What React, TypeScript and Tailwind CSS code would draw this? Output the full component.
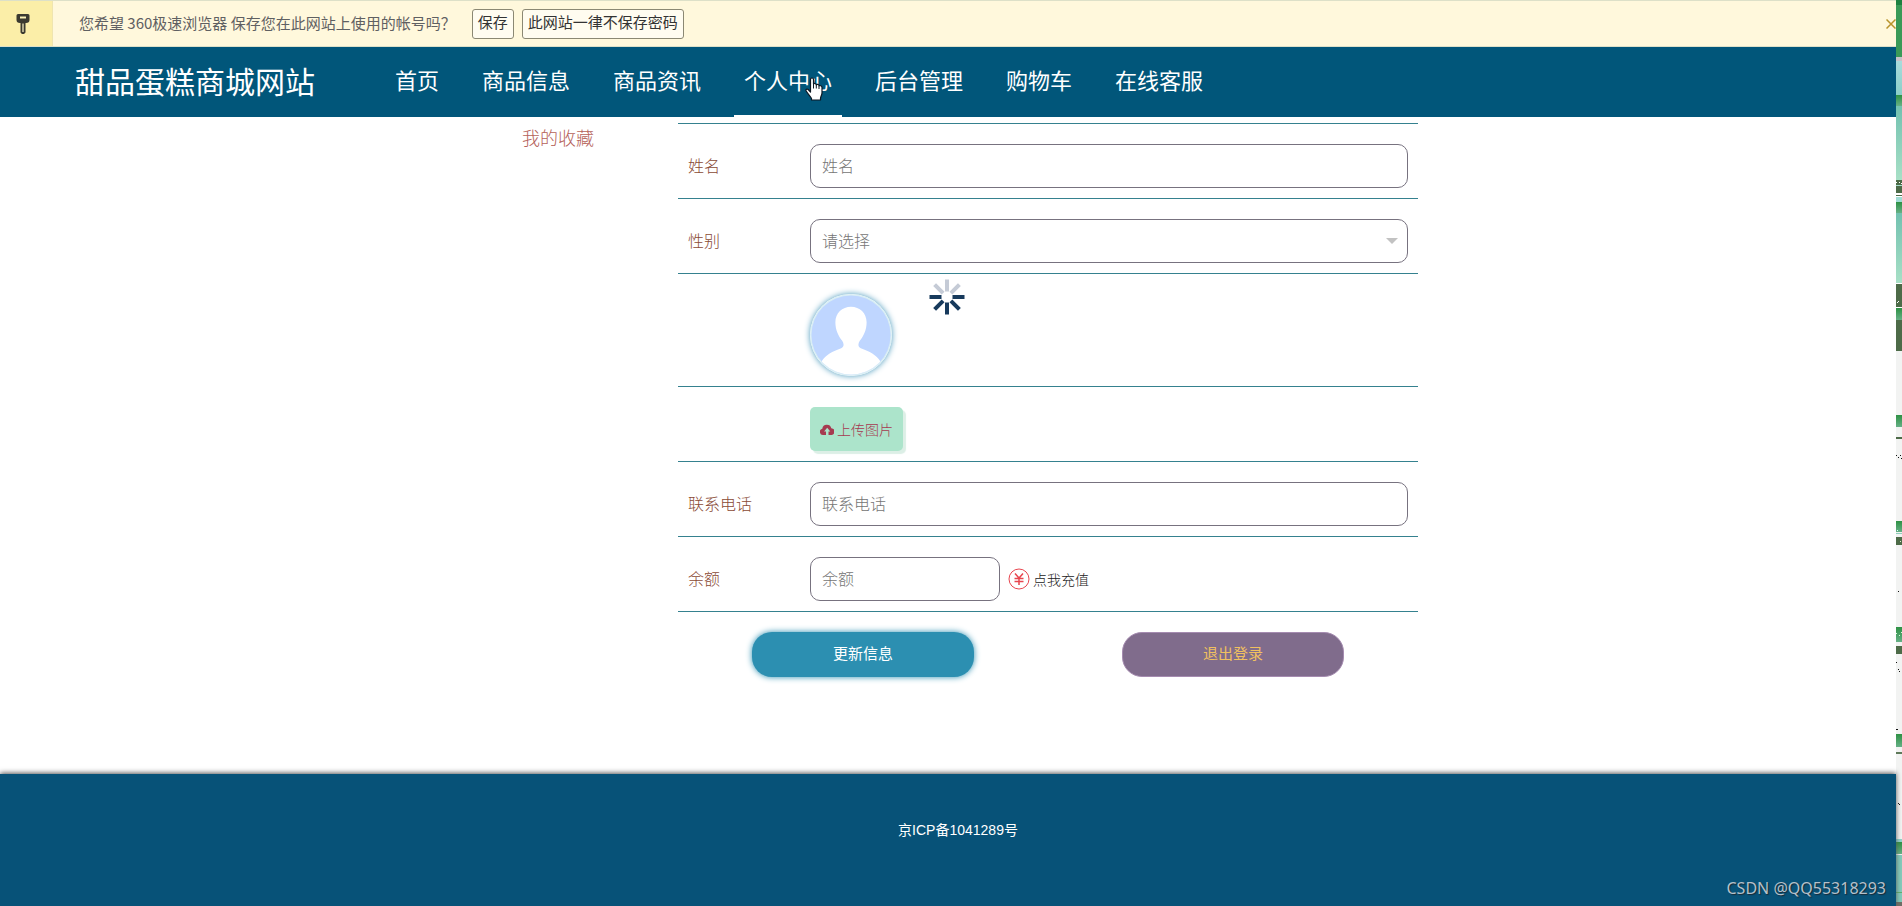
import type { ReactNode } from "react"

const NAV = ["首页", "商品信息", "商品资讯", "个人中心", "后台管理", "购物车", "在线客服"]
const CURRENT = "个人中心"

const FIELD =
    "h-11 rounded-[10px] border border-[#77727f] bg-white px-[11px] pb-[3px] text-base font-light text-[#757575] placeholder:text-[#757575]"

// Bands of the desktop wallpaper that shows beside the window: [y, height, fill]
const BANDS: [number, number, string][] = [
    [0, 5, "#1d8040"],
    [5, 52, "#3a9a57"],
    [57, 4, "#c6c3c8"],
    [61, 34, "url(#sky)"],
    [95, 11, "url(#grass)"],
    [106, 74, "url(#sea)"],
    [180, 13, "#4d6b48"],
    [185, 1, "#a6dccb"],
    [195, 1, "#4d6b48"],
    [197, 5, "#a0dcd4"],
    [202, 11, "url(#grass)"],
    [213, 70, "url(#sea)"],
    [284, 23, "#4d6b48"],
    [308, 12, "url(#grass)"],
    [320, 31, "#4d6b48"],
    [415, 12, "url(#grass)"],
    [437, 2, "#4d6b48"],
    [521, 11, "url(#grass)"],
    [533, 1, "#8fd0bd"],
    [537, 8, "#4d6b48"],
    [627, 15, "url(#grass)"],
    [646, 8, "#4d6b48"],
    [734, 13, "url(#grass)"],
    [752, 2, "#5f7a5a"],
    [839, 3, "#8fd4cb"],
    [842, 12, "url(#grass)"],
    [855, 47, "#84cbbb"],
    [892, 1, "#5cb170"],
    [902, 4, "#6f6f66"],
]

const SPECKS: [number, number, string][] = [
    [0, 182, "#fff"], [3, 182, "#fff"], [5, 183, "#fff"], [1, 302, "#fff"], [2, 301, "#fff"],
    [0, 455, "#111"], [2, 457, "#111"], [4, 455, "#111"], [5, 458, "#111"],
    [1, 530, "#dff"], [4, 541, "#dec"], [2, 591, "#111"], [0, 633, "#dfd"], [3, 635, "#dfd"],
    [5, 632, "#dfd"], [0, 662, "#111"], [2, 669, "#111"], [3, 671, "#111"],
    [0, 729, "#111"], [1, 729, "#111"], [2, 803, "#111"], [3, 804, "#111"],
]

function DesktopEdge() {
    return (
        <svg viewBox="0 0 6 906" preserveAspectRatio="none" className="w-1.5 shrink-0 self-stretch" aria-hidden>
            <defs>
                <linearGradient id="sky" x2="0" y2="1">
                    <stop stopColor="#a8dcdc" />
                    <stop offset="1" stopColor="#8bcfc8" />
                </linearGradient>
                <linearGradient id="grass" x2="0" y2="1">
                    <stop stopColor="#2e9144" />
                    <stop offset="1" stopColor="#66b086" />
                </linearGradient>
                <linearGradient id="sea" x2="0" y2="1">
                    <stop stopColor="#72c1b0" />
                    <stop offset="1" stopColor="#a8e0c6" />
                </linearGradient>
            </defs>
            <rect width="6" height="351" fill="#fff" />
            <rect y="351" width="6" height="555" fill="#f2f3f2" />
            {BANDS.map(([y, h, fill]) => (
                <rect key={y} y={y} width="6" height={h} fill={fill} />
            ))}
            {SPECKS.map(([x, y, fill]) => (
                <rect key={`${x}-${y}`} x={x} y={y} width="1" height="1" fill={fill} />
            ))}
        </svg>
    )
}

function KeyIcon() {
    return (
        <svg width="16" height="20" viewBox="0 0 16 20" aria-hidden>
            <path d="M1.5 1.5Q1.5 0 3 0H13Q14.500 0 14.500 1.500V6Q14.500 9 11 9H10.500V18.500L9 20H7L5.500 18.500V9H5Q1.500 9 1.500 6Z" fill="#3b3a30" />
            <path d="M5 2.500H11V4.500H5Z" fill="#fdf3b8" />
            <path d="M8 9.500V18" stroke="#d8d2a8" strokeWidth="1.500" />
        </svg>
    )
}

function HandCursor() {
    return (
        <svg
            width="18"
            height="24"
            viewBox="0 0 18 24"
            className="pointer-events-none absolute left-[71px] top-[30px]"
            aria-hidden
        >
            <path
                d="M5.500 2.500C5.500 .5 8.500 .5 8.500 2.500V7C9 6.200 11.200 6.300 11.300 7.800C12 6.900 14 7.300 14 8.800C15 8.200 17 8.800 17 10.500V16C17 18 15.500 19.500 15.500 21.500V23H6.500V21.500C5.500 19.500 3 17 1.200 14C.4 12.500 2 11.500 3.200 12.500L5.500 15Z"
                fill="#fff"
                stroke="#0c1722"
                strokeWidth="1.2"
                strokeLinejoin="round"
            />
            <path d="M8.500 7V11.500M11.300 8V11.500M14 9V12" stroke="#0c1722" strokeWidth="1" />
        </svg>
    )
}

function Avatar() {
    return (
        <svg viewBox="0 0 84 84" className="size-[82px] rounded-full shadow-[0_0_6px_#4596ba]" role="img" aria-label="头像">
            <defs>
                <clipPath id="face">
                    <circle cx="42" cy="42" r="40.500" />
                </clipPath>
            </defs>
            <circle cx="42" cy="42" r="42" fill="#d9eef5" />
            <g clipPath="url(#face)">
                <rect width="84" height="84" fill="#bfd6ff" />
                <path
                    d="M42 13C51 13 58 19.500 58 29C58 37 55 43 51 48C49 51 49 54 52 55.500C61 59 68 62 72 69V84H12V69C16 62 23 59 32 55.500C35 54 35 51 33 48C29 43 26 37 26 29C26 19.500 33 13 42 13Z"
                    fill="#fff"
                />
            </g>
        </svg>
    )
}

function Spinner() {
    return (
        <svg width="36" height="36" viewBox="-18 -18 36 36" className="absolute left-[251px] top-[5px]" aria-hidden>
            {[0, 45, 90, 135, 180, 225, 270, 315].map((deg) => (
                <rect
                    key={deg}
                    x="-2"
                    y="-17.500"
                    width="4"
                    height="12"
                    transform={`rotate(${deg})`}
                    fill={deg === 0 || deg === 45 || deg === 315 ? "#c5cbd6" : "#173a5c"}
                />
            ))}
        </svg>
    )
}

function UploadCloud() {
    return (
        <svg width="14" height="11" viewBox="0 0 14 11" aria-hidden>
            <path
                d="M6 11H3.200A3.200 3.200 0 0 1 2.300 4.700 4.600 4.600 0 0 1 11.300 4.200 3.400 3.400 0 0 1 10.800 11H8.500V7.500H10.300L7.200 3.800 4.100 7.500H6Z"
                fill="#a63a50"
            />
        </svg>
    )
}

function YuanCoin() {
    return (
        <svg width="22" height="22" viewBox="0 0 22 22" fill="none" stroke="#e8464f" aria-hidden>
            <circle cx="11" cy="11" r="10" strokeWidth="1" />
            <path d="M7 5.500L11 10L15 5.500M11 10V17M6.500 10.500H15.500M6.500 13.500H15.500" strokeWidth="1.500" />
        </svg>
    )
}

function Row({ label, htmlFor, children }: { label?: string; htmlFor?: string; children: ReactNode }) {
    return (
        <div className="relative flex items-center border-b border-[#35818f] px-2.5 pb-2.5 pt-5">
            <div className="w-[122px] shrink-0 pb-[3px]">
                {label && (
                    <label htmlFor={htmlFor} className="text-base font-light text-[#8a4a35]">
                        {label}
                    </label>
                )}
            </div>
            {children}
        </div>
    )
}

export default function App() {
    return (
        <div className="flex min-h-screen bg-white font-['Noto_Sans_CJK_SC',sans-serif]">
            <div className="flex min-w-0 flex-1 flex-col">
                {/* Browser's save-password bar */}
                <div className="flex h-[47px] items-center border-y border-[#dde0c8] bg-[#fff8dc] text-[15px] text-[#5f6062]">
                    <div className="flex w-[53px] shrink-0 items-center justify-center self-stretch border-r border-[#efe5b0] bg-[#fbeea8] pr-1.5">
                        <KeyIcon />
                    </div>
                    <p className="ml-[26px]">您希望 360极速浏览器 保存您在此网站上使用的帐号吗？</p>
                    <button className="ml-4 h-[30px] rounded-[3px] border border-[#8b8873] bg-[#fffcf0] px-[5px] pb-0.5 text-[#333]">
                        保存
                    </button>
                    <button className="ml-2 h-[30px] rounded-[3px] border border-[#8b8873] bg-[#fffcf0] px-[5px] pb-0.5 text-[#333]">
                        此网站一律不保存密码
                    </button>
                    <button aria-label="关闭" className="ml-auto">
                        <svg width="10" height="10" viewBox="0 0 10 10" aria-hidden>
                            <path d="M.5 .5L9.500 9.500M9.500 .5L.5 9.500" stroke="#b8932b" strokeWidth="1.500" />
                        </svg>
                    </button>
                </div>

                <header className="flex h-[70px] items-center bg-[#01567a] pl-[75px] text-white">
                    <h1 className="pb-1 text-3xl">甜品蛋糕商城网站</h1>
                    <nav className="ml-[70px] flex gap-[23px] self-stretch text-[22px]">
                        {NAV.map((item) => (
                            <a
                                key={item}
                                href="#"
                                className={`relative flex items-center border-b-2 px-2.5 pb-[3px] ${
                                    item === CURRENT ? "border-white" : "border-transparent"
                                }`}
                            >
                                {item}
                                {item === CURRENT && <HandCursor />}
                            </a>
                        ))}
                    </nav>
                </header>

                <main className="mx-auto flex w-full max-w-[940px] gap-10 pb-[97px] pt-1.5">
                    <aside className="w-40 shrink-0 text-center">
                        <a href="#" className="text-lg font-light text-[#b5625a]">
                            我的收藏
                        </a>
                    </aside>

                    <form className="flex-1 border-t border-[#35818f]">
                        <Row label="姓名" htmlFor="name">
                            <input id="name" placeholder="姓名" className={`${FIELD} w-full`} />
                        </Row>
                        <Row label="性别" htmlFor="gender">
                            <div className="relative flex-1">
                                <select id="gender" className={`${FIELD} block w-full appearance-none`}>
                                    <option>请选择</option>
                                </select>
                                <svg
                                    width="12"
                                    height="6"
                                    viewBox="0 0 12 6"
                                    className="pointer-events-none absolute right-2.5 top-[19px]"
                                    aria-hidden
                                >
                                    <path d="M0 0H12L6 6Z" fill="#c2c2c2" />
                                </svg>
                            </div>
                        </Row>
                        <Row>
                            <Avatar />
                            <Spinner />
                        </Row>
                        <Row>
                            <button
                                type="button"
                                className="flex h-11 items-center gap-[3px] rounded-[5px] bg-[#ace4cb] px-2.5 text-sm font-light text-[#a63a50] shadow-[3px_3px_1px_#dcefe6]"
                            >
                                <UploadCloud />
                                上传图片
                            </button>
                        </Row>
                        <Row label="联系电话" htmlFor="phone">
                            <input id="phone" placeholder="联系电话" className={`${FIELD} w-full`} />
                        </Row>
                        <Row label="余额" htmlFor="balance">
                            <input id="balance" placeholder="余额" className={`${FIELD} w-[190px]`} />
                            <a href="#" className="ml-2 flex items-center gap-[3px] text-sm font-light text-[#222]">
                                <YuanCoin />
                                点我充值
                            </a>
                        </Row>
                        <div className="grid grid-cols-2 justify-items-center pt-5">
                            <button
                                type="button"
                                className="h-[45px] w-3/5 rounded-[20px] bg-[#2c8fb1] pb-0.5 text-[15px] text-white shadow-[0_0_6px_#2c8fb1]"
                            >
                                更新信息
                            </button>
                            <button
                                type="button"
                                className="h-[45px] w-3/5 rounded-[20px] border border-[#a58bb0] bg-[#806c8c] pb-0.5 text-[15px] text-[#f0c060]"
                            >
                                退出登录
                            </button>
                        </div>
                    </form>
                </main>

                <footer className="relative flex flex-1 flex-col items-center bg-[#075278] pb-12 pl-5 pt-[46px] text-white shadow-[0_-1px_5px_#555]">
                    <p className="font-['Liberation_Sans','Noto_Sans_CJK_SC',sans-serif] text-sm">京ICP备1041289号</p>
                    <span className="absolute bottom-1.5 right-2.5 font-['Noto_Sans',sans-serif] text-base text-[#b4c0ca] [text-shadow:1px_1px_1px_#1a2a36]">
                        CSDN @QQ55318293
                    </span>
                </footer>
            </div>
            <DesktopEdge />
        </div>
    )
}
